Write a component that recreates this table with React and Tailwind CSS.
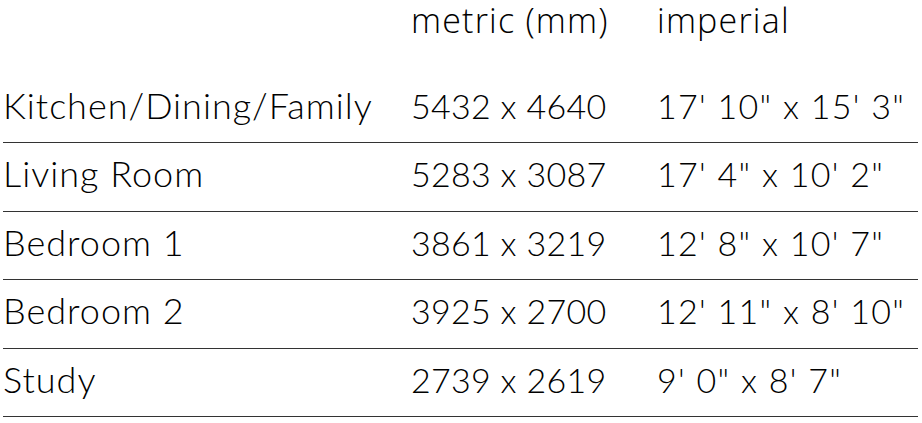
import React from "react"

const rooms = [
  { name: "Kitchen/Dining/Family", metric: "5432 x 4640", imperial: "17' 10\" x 15' 3\"" },
  { name: "Living Room", metric: "5283 x 3087", imperial: "17' 4\" x 10' 2\"" },
  { name: "Bedroom 1", metric: "3861 x 3219", imperial: "12' 8\" x 10' 7\"" },
  { name: "Bedroom 2", metric: "3925 x 2700", imperial: "12' 11\" x 8' 10\"" },
  { name: "Study", metric: "2739 x 2619", imperial: "9' 0\" x 8' 7\"" },
]

const App = () => {
  return (
    <div className="bg-white w-[922px] h-[423px] overflow-hidden text-black">
      <div className="ml-[3px] w-[915px]">
        <div className="grid grid-cols-[408px_246px_1fr] h-[74.5px] font-['Open_Sans',sans-serif] font-light text-[34px] leading-[40px] tracking-[1.2px]">
          <div />
          <div>metric (mm)</div>
          <div>imperial</div>
        </div>
        {rooms.map(room => (
          <div
            key={room.name}
            className="grid grid-cols-[408px_246px_1fr] items-baseline h-[68.5px] pt-[10px] border-b border-[#333] font-['Lato',sans-serif] font-light leading-[41px]"
          >
            <div className="text-[36px] tracking-[1px]">{room.name}</div>
            <div className="text-[34px] tracking-[0.3px]">{room.metric}</div>
            <div className="text-[34px] tracking-[1.3px]">{room.imperial}</div>
          </div>
        ))}
      </div>
    </div>
  )
}

export default App
